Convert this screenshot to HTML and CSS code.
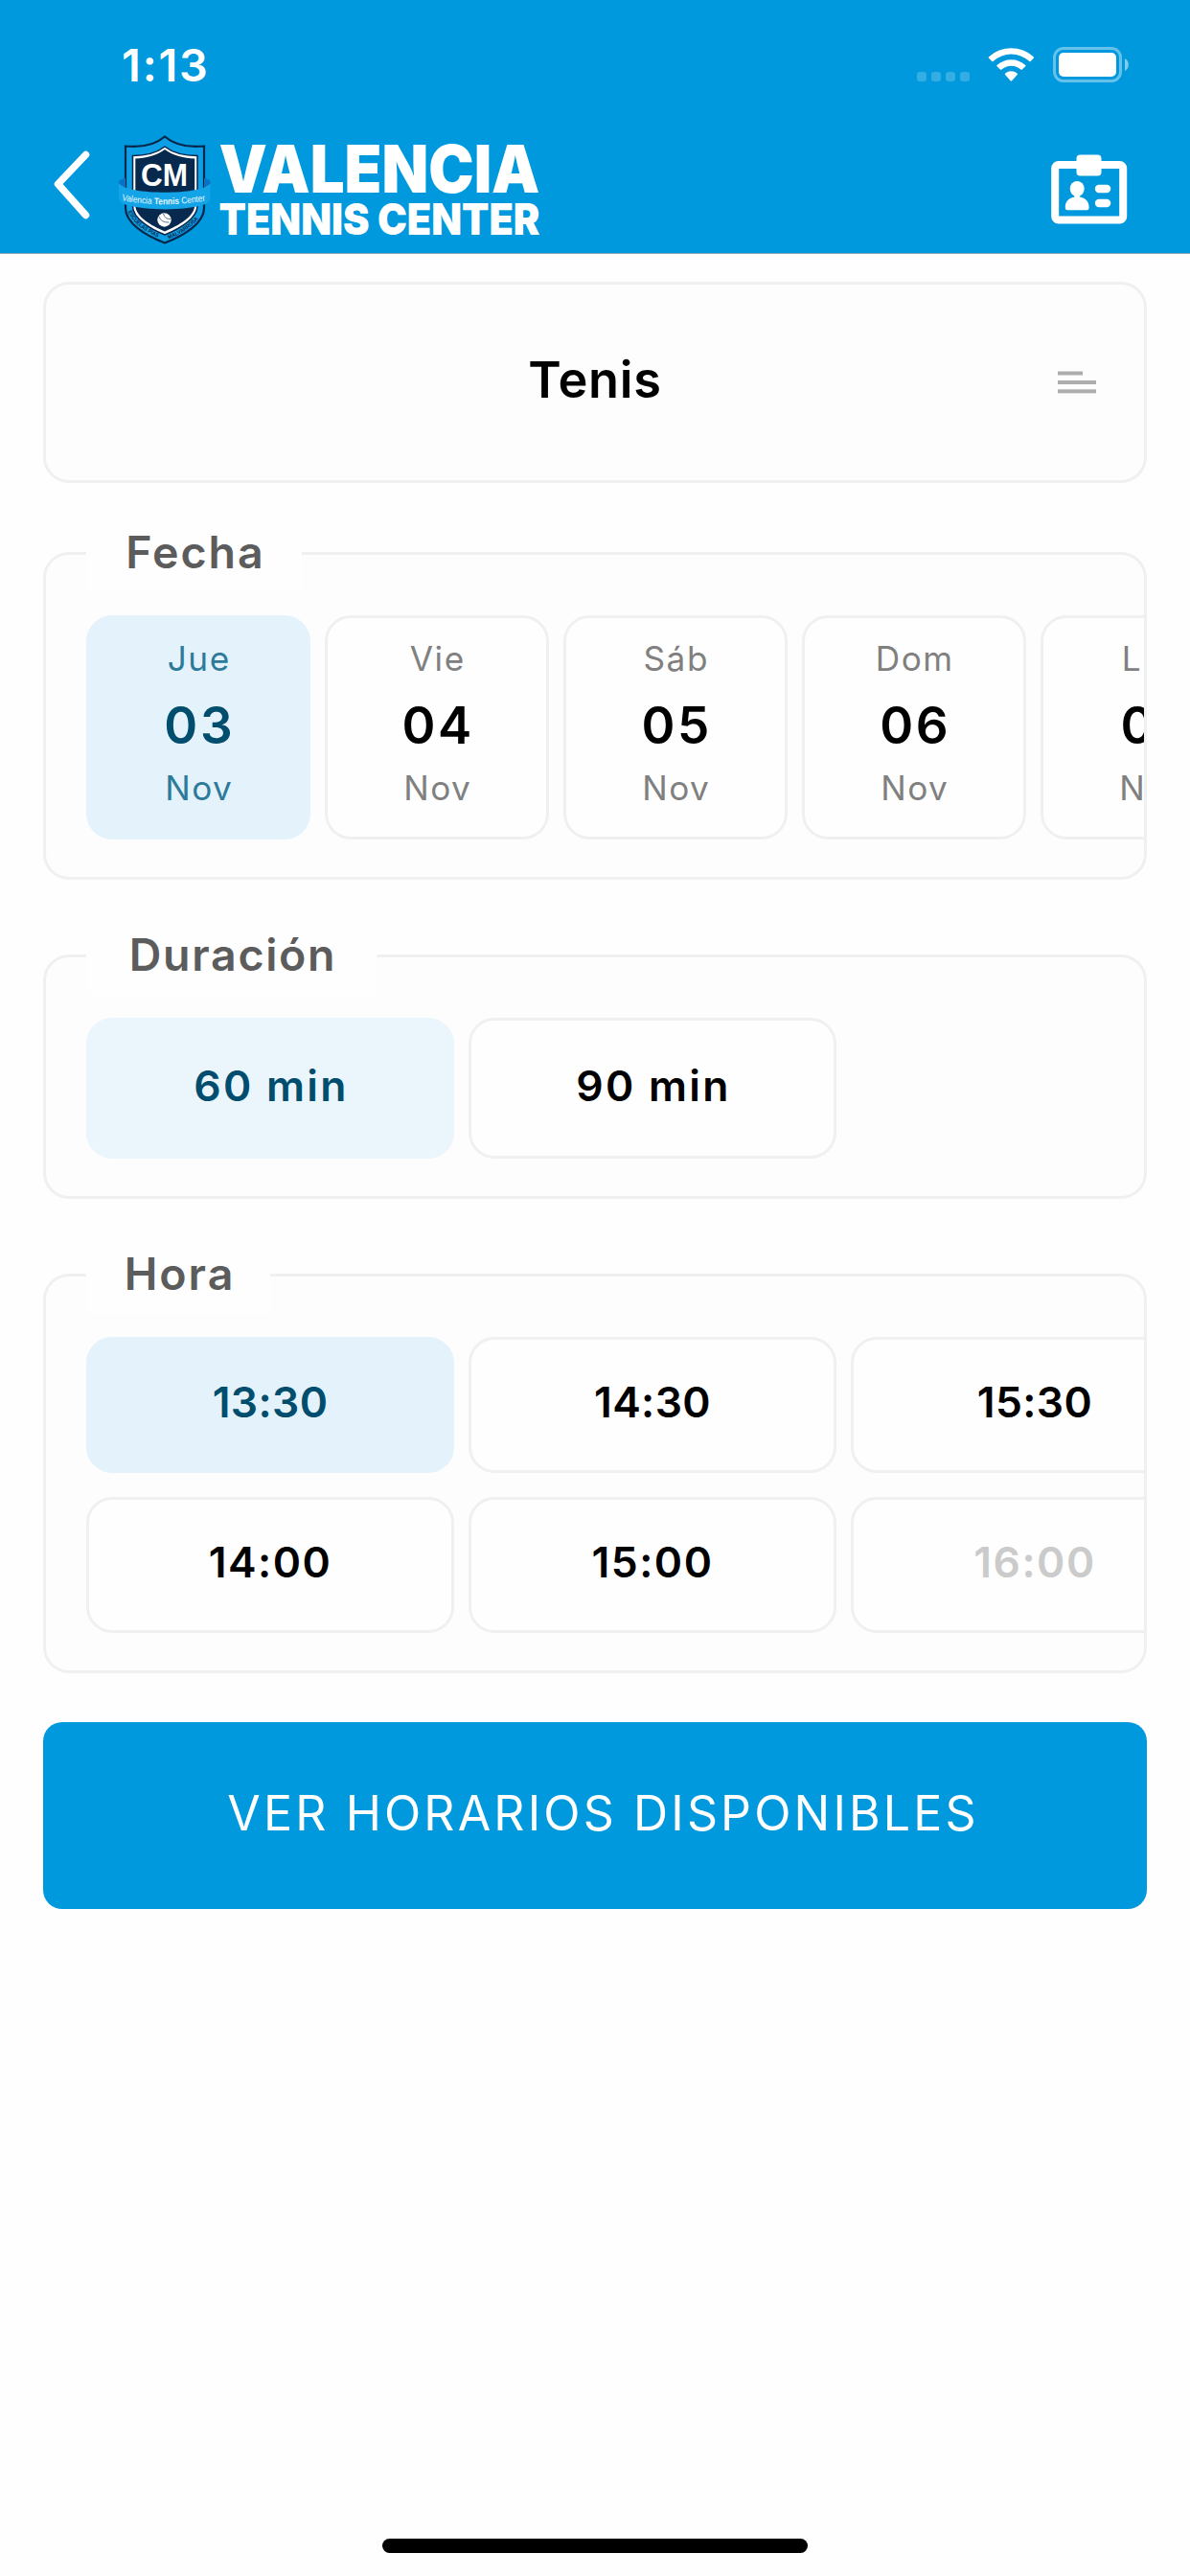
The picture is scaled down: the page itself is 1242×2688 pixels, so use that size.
FILE: index.html
```
<!DOCTYPE html>
<html lang="es">
<head>
<meta charset="utf-8">
<title>Valencia Tennis Center</title>
<link rel="stylesheet" href="styles.css">
</head>
<body>
<header class="header">
  <div class="status">
    <span class="status-time">1:13</span>
    <svg class="status-icons" width="222" height="40" viewBox="0 0 222 40" fill="#fff">
      <g opacity=".2">
        <rect x="1" y="27" width="10" height="10" rx="3"/>
        <rect x="16" y="27" width="10" height="10" rx="3"/>
        <rect x="31" y="27" width="10" height="10" rx="3"/>
        <rect x="46" y="27" width="10" height="10" rx="3"/>
      </g>
      <path d="M76.100 12.800Q75.300 12 76.100 11.200A35 35 0 0 1 122.700 11.200Q123.500 12 122.700 12.800L119.500 15.900Q118.800 16.500 118 15.800A27.500 27.500 0 0 0 80.800 15.800Q80 16.500 79.300 15.900Z"/>
      <path d="M84.600 21.200Q83.900 20.500 84.700 19.800A22 22 0 0 1 114.100 19.800Q114.900 20.500 114.200 21.200L110.900 24.500Q110.200 25.200 109.400 24.500A15 15 0 0 0 89.400 24.500Q88.600 25.200 87.900 24.500Z"/>
      <path d="M93.100 29.900Q92.400 29.200 93.200 28.500A9.800 9.800 0 0 1 105.600 28.500Q106.400 29.200 105.700 29.900L100.100 36.300Q99.400 37 98.700 36.300Z"/>
      <rect x="144.500" y="2.500" width="69" height="34" rx="9.500" fill="none" stroke="#fff" stroke-width="3" opacity=".4"/>
      <rect x="149" y="7" width="60" height="25" rx="5"/>
      <path d="M218 13a7.500 7.500 0 0 1 0 13z" opacity=".5"/>
    </svg>
  </div>
  <div class="nav">
    <svg class="back" width="50" height="76" viewBox="0 0 50 76" fill="none" stroke="#fff" stroke-width="7.500" stroke-linecap="round" stroke-linejoin="round"><path d="M39.500 7.500L10.500 38 39.500 70.500"/></svg>
    <svg class="logo" width="446" height="120" viewBox="120 138 446 120">
      <path d="M172 142.500C161 152 146 154 131 152.500V217C131 233 152 246 172 253.500C192 246 213 233 213 217V152.500C198 154 183 152 172 142.500Z" fill="#0d9fe6" stroke="#06264a" stroke-width="2.200"/>
      <path d="M172 153C163 160 151 162.500 138.500 162.500V215C138.500 228 157 239 172 245C187 239 206 228 206 215V162.500C193 162.500 181 160 172 153Z" fill="#fff" stroke="#06264a" stroke-width="1.500"/>
      <path d="M172 156C163 162.500 152 165.200 141.300 165.500V214C141.300 226 158 235.500 172 241.500C186 235.500 203.200 226 203.200 214V165.500C192 165.200 181 162.500 172 156Z" fill="#06294d"/>
      <path d="M131 186C125 187 123.500 189 124 192L131 199ZM213 186C219 187 220.500 189 219.500 192L213 199Z" fill="#0873c4"/>
      <path d="M124 191C131 204 213 204 219.500 191V206C219 210 217 212 213 213.500C190 220 155 220 131 213.500C126 212 124.500 210 124 206Z" fill="#12a4e6"/>
      <text x="147" y="193.500" class="logo-cm" textLength="49" lengthAdjust="spacingAndGlyphs">CM</text>
      <path id="ribbon" d="M127 209Q172 217.500 217 209" fill="none"/>
      <text class="logo-ribbon"><textPath href="#ribbon" textLength="88" lengthAdjust="spacingAndGlyphs">Valencia <tspan font-weight="700">Tennis</tspan> Center</textPath></text>
      <path id="arcleft" d="M133.500 221Q143 240 171 250" fill="none"/>
      <path id="arcright" d="M176 249.500Q201 240 211 222" fill="none"/>
      <text class="logo-arc"><textPath href="#arcleft" textLength="42" lengthAdjust="spacingAndGlyphs">ESCUELAS PIAS</textPath></text>
      <text class="logo-arc"><textPath href="#arcright" textLength="38" lengthAdjust="spacingAndGlyphs">MALVARROSA</textPath></text>
      <circle cx="171.500" cy="229.500" r="7.200" fill="#fff"/>
      <path d="M166 226Q168 232.500 176.500 232M170.500 223Q172 229 178 228.500" fill="none" stroke="#5f7388" stroke-width="1"/>
      <text x="228.500" y="201.300" class="logo-name" font-size="69" textLength="335" lengthAdjust="spacingAndGlyphs">VALENCIA</text>
      <text x="228.500" y="244.800" class="logo-name" font-size="45.400" textLength="335" lengthAdjust="spacingAndGlyphs">TENNIS CENTER</text>
    </svg>
    <svg class="card-icon" width="82" height="76" viewBox="0 0 82 76" fill="#fff">
      <rect x="5.200" y="12" width="71" height="57.500" rx="3.500" fill="none" stroke="#fff" stroke-width="8"/>
      <rect x="27.500" y="1.500" width="26" height="22" rx="4"/>
      <ellipse cx="28.200" cy="37" rx="7.500" ry="8"/>
      <path d="M25.500 42h5.400v3.500c6 1 9.700 4.500 9.700 11q0 2.700-2.200 2.700H18q-2.200 0-2.200-2.700c0-6.500 3.700-10 9.700-11z"/>
      <rect x="46.800" y="32.800" width="16.500" height="8.500" rx="4.200"/>
      <rect x="46.800" y="47.700" width="16.500" height="8.500" rx="4.200"/>
    </svg>
  </div>
</header>
<main class="content">
  <div class="sport">
    <span></span>
    <span class="sport-name">Tenis</span>
    <svg width="40" height="24" viewBox="0 0 40 24" fill="#adadad"><rect y=".5" width="26" height="4"/><rect y="10" width="40" height="4"/><rect y="19.300" width="40" height="4"/></svg>
  </div>

  <section class="group group-date">
    <h2 class="legend">Fecha</h2>
    <div class="scroller dates">
      <div class="cell date selected"><span class="day">Jue</span><span class="num">03</span><span class="month">Nov</span></div>
      <div class="cell date"><span class="day">Vie</span><span class="num">04</span><span class="month">Nov</span></div>
      <div class="cell date"><span class="day">Sáb</span><span class="num">05</span><span class="month">Nov</span></div>
      <div class="cell date"><span class="day">Dom</span><span class="num">06</span><span class="month">Nov</span></div>
      <div class="cell date"><span class="day">Lun</span><span class="num">07</span><span class="month">Nov</span></div>
    </div>
  </section>

  <section class="group group-duration">
    <h2 class="legend">Duración</h2>
    <div class="scroller durations">
      <div class="cell option selected">60 min</div>
      <div class="cell option">90 min</div>
    </div>
  </section>

  <section class="group group-hour">
    <h2 class="legend">Hora</h2>
    <div class="scroller hours">
      <div class="cell option selected">13:30</div>
      <div class="cell option">14:30</div>
      <div class="cell option">15:30</div>
      <div class="cell option wide">14:00</div>
      <div class="cell option wide">15:00</div>
      <div class="cell option wide disabled">16:00</div>
    </div>
  </section>

  <button class="submit">VER HORARIOS DISPONIBLES</button>
</main>
<div class="home-indicator"></div>
</body>
</html>
```
FILE: styles.css
```
* { box-sizing: border-box; }

body {
  margin: 0;
  height: 2688px;
  display: flex;
  flex-direction: column;
  overflow: hidden;
  background: #fefefe;
  color: #000;
  font-family: Inter, "Liberation Sans", sans-serif;
}

svg { display: block; flex: none; }

.header {
  height: 265px;
  background: #0099dd;
  border-bottom: 1px solid #8aa9b8;
}

.status {
  display: flex;
  justify-content: space-between;
  align-items: flex-start;
  height: 156px;
  padding: 38px 64px 0 127px;
}

.status-time {
  color: #fff;
  font-size: 46.8px;
  font-weight: 600;
  line-height: 60px;
  letter-spacing: 1.85px;
}

.status-icons { margin-top: 10px; }

.nav {
  display: flex;
  align-items: flex-start;
  padding-left: 50px;
}

.back { margin-right: 20px; margin-top: -2px; }
.logo { margin-top: -18px; overflow: visible; }
.card-icon { margin: 4px 0 0 530px; }

.logo-cm {
  fill: #fff;
  font: 700 34px "Liberation Sans", Arial, sans-serif;
}

.logo-ribbon {
  fill: #e8f6fd;
  font: 400 9.5px "Liberation Sans", Arial, sans-serif;
}

.logo-arc {
  fill: #06264a;
  font: 700 6px "Liberation Sans", Arial, sans-serif;
}

.logo-name {
  fill: #fff;
  font-weight: 900;
}

.content {
  display: flex;
  flex-direction: column;
  padding: 29px 45px 0;
}

.sport {
  display: grid;
  grid-template-columns: 40px 1fr 40px;
  align-items: center;
  height: 210px;
  padding: 0 50px;
  border: 3px solid #f0f0f0;
  border-radius: 27px;
  background: #fdfdfd;
}

.sport-name {
  padding-bottom: 6px;
  text-align: center;
  font-size: 52.3px;
  font-weight: 600;
  letter-spacing: 0.7px;
}

.group {
  padding-bottom: 39px;
  border: 3px solid #f0f0f0;
  border-radius: 27px;
  background: #fdfdfd;
}

.group-date { margin-top: 72px; }
.group-duration, .group-hour { margin-top: 78px; }

.legend {
  width: 225px;
  height: 84px;
  margin: -45px 0 24px 42px;
  padding-left: 3px;
  background: #fefefe;
  color: #5c5c5c;
  text-align: center;
  font-size: 46.5px;
  font-weight: 600;
  line-height: 84px;
  letter-spacing: 2px;
}

.group-duration .legend { width: 303px; letter-spacing: 1.7px; }
.group-hour .legend { width: 192px; }

.scroller {
  display: grid;
  gap: 25px 15px;
  padding-left: 42px;
  overflow: hidden;
}

.dates { grid-template-columns: repeat(5, 234px); }
.durations { grid-template-columns: repeat(2, 384px); }
.hours { grid-template-columns: repeat(3, 384px); }

.cell {
  border: 3px solid #f0f0f0;
  border-radius: 27px;
  background: #fefefe;
}

.date {
  display: flex;
  flex-direction: column;
  align-items: center;
  height: 234px;
  padding-top: 18px;
}

.day, .month {
  margin-right: -1.5px;
  color: #808080;
  font-size: 35.2px;
  line-height: 48px;
  letter-spacing: 1.5px;
}

.month { line-height: 37px; }

.num {
  margin-right: -2.6px;
  font-size: 53px;
  font-weight: 600;
  line-height: 93px;
  letter-spacing: 2.6px;
}

.option {
  display: flex;
  justify-content: center;
  align-items: center;
  height: 142px;
  padding-bottom: 6px;
  font-size: 44.4px;
  font-weight: 600;
  letter-spacing: 0.4px;
}

.durations .option {
  height: 147px;
  padding: 0 0 5px 2px;
  letter-spacing: 2.3px;
}

.option.wide { letter-spacing: 1.5px; }

.selected {
  border-color: #e4f3fb;
  background: #e4f3fb;
  color: #004d6e;
}

.durations .selected {
  border-color: #eaf5fc;
  background: #eaf5fc;
}

.selected .day, .selected .month { color: #2d7a9b; }

.disabled { color: #cbcbcb; }

.submit {
  height: 195px;
  margin-top: 51px;
  padding: 0 0 5px 17px;
  border: 0;
  border-radius: 20px;
  background: #0099dd;
  color: #fff;
  font-family: inherit;
  font-size: 50px;
  font-weight: 400;
  letter-spacing: 3.15px;
}

.home-indicator {
  width: 444px;
  height: 15px;
  margin: auto auto 24px;
  border-radius: 8px;
  background: #000;
}
```
